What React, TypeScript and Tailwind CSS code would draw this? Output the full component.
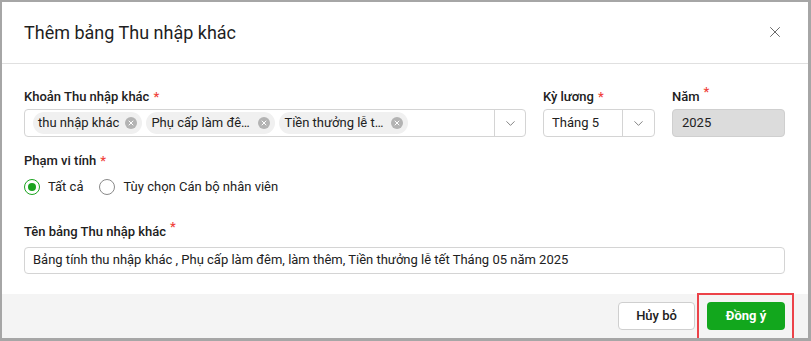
import { X, ChevronDown } from 'lucide-react';

function Tag({ label, truncate }: { label: string; truncate?: boolean }) {
  return (
    <div className="flex h-[22px] items-center gap-[6px] rounded-[11px] bg-[#f0f0f0] pl-[5px] pr-[5px]">
      <span className={truncate ? 'max-w-[101px] truncate' : ''}>{label}</span>
      <span className="flex h-[12px] w-[12px] items-center justify-center rounded-full bg-[#b3b3b3]">
        <X size={8} strokeWidth={3} className="text-white" />
      </span>
    </div>
  );
}

function Label({ text, raised }: { text: string; raised?: boolean }) {
  return (
    <div className="flex h-[16px] items-center text-[13px] font-medium leading-[16px] text-[#212121]">
      {text}
      <span className={raised ? 'relative -top-[5px] ml-[4px] text-[#f0433c]' : 'ml-[4px] text-[#f0433c]'}>*</span>
    </div>
  );
}

function Radio({ checked, label }: { checked?: boolean; label: string }) {
  return (
    <div className="flex items-center gap-[8px]">
      <span
        className={
          checked
            ? 'flex h-[16px] w-[16px] items-center justify-center rounded-full border-[1.5px] border-[#1aa31e]'
            : 'h-[16px] w-[16px] rounded-full border border-[#8a8a8a]'
        }
      >
        {checked && <span className="h-[8px] w-[8px] rounded-full bg-[#1aa31e]" />}
      </span>
      <span>{label}</span>
    </div>
  );
}

export default function App() {
  return (
    <div
      className="relative flex h-[341px] w-[811px] flex-col overflow-hidden border-b-[3px] border-l-2 border-r-[3px] border-t-2 border-[#a6a6a6] bg-white text-[13px] text-[#212121]"
      style={{ fontFamily: 'Roboto, "Noto Sans", sans-serif' }}
    >
      {/* header */}
      <div className="flex h-[62px] shrink-0 items-center justify-between border-b border-[#e0e0e0] pl-[22px] pr-[24px]">
        <h1 className="text-[18px] leading-[22px] text-[#1f1f1f]">Thêm bảng Thu nhập khác</h1>
        <X size={18} strokeWidth={1.3} className="mt-[-2px] text-[#666]" />
      </div>

      {/* body */}
      <div className="flex flex-1 flex-col pl-[22px] pr-[23px] pt-[25px]">
        <div className="flex gap-[17px]">
          <div className="flex w-[502px] flex-col gap-[4px]">
            <Label text="Khoản Thu nhập khác" />
            <div className="flex h-[28px] items-center rounded-[4px] border border-[#d4d4d4]">
              <div className="flex flex-1 items-center gap-[4px] pl-[8px]">
                <Tag label="thu nhập khác" />
                <Tag label="Phụ cấp làm đêm, làm thêm" truncate />
                <Tag label="Tiền thưởng lễ tết, ngày lễ" truncate />
              </div>
              <div className="flex h-full w-[31px] items-center justify-center border-l border-[#d4d4d4]">
                <ChevronDown size={15} strokeWidth={1.3} className="text-[#666]" />
              </div>
            </div>
          </div>
          <div className="flex w-[112px] flex-col gap-[4px]">
            <Label text="Kỳ lương" />
            <div className="flex h-[28px] items-center rounded-[4px] border border-[#d4d4d4]">
              <span className="flex-1 pl-[8px]">Tháng 5</span>
              <div className="flex h-full w-[32px] items-center justify-center border-l border-[#d4d4d4]">
                <ChevronDown size={15} strokeWidth={1.3} className="text-[#666]" />
              </div>
            </div>
          </div>
          <div className="flex w-[113px] flex-col gap-[4px]">
            <Label text="Năm" raised />
            <div className="flex h-[28px] items-center rounded-[4px] border border-[#cfcfcf] bg-[#dcdcdc] pl-[9px]">
              2025
            </div>
          </div>
        </div>

        <div className="mt-[16px]">
          <Label text="Phạm vi tính" />
        </div>
        <div className="mt-[8px] flex items-center gap-[16px]">
          <Radio checked label="Tất cả" />
          <Radio label="Tùy chọn Cán bộ nhân viên" />
        </div>

        <div className="mt-[27px]">
          <Label text="Tên bảng Thu nhập khác" raised />
        </div>
        <div className="mt-[7px] flex h-[27px] items-center rounded-[4px] border border-[#d4d4d4] pl-[8px]">
          Bảng tính thu nhập khác , Phụ cấp làm đêm, làm thêm, Tiền thưởng lễ tết Tháng 05 năm 2025
        </div>
      </div>

      {/* footer */}
      <div className="flex h-[44px] shrink-0 items-center justify-end gap-[12px] bg-[#f4f4f4] pr-[23px]">
        <button className="h-[28px] w-[77px] rounded-[4px] border border-[#cfcfcf] bg-white text-[13px] font-medium text-[#212121]">
          Hủy bỏ
        </button>
        <button className="h-[28px] w-[78px] rounded-[4px] bg-[#12a71d] text-[13px] font-bold text-white">
          Đồng ý
        </button>
      </div>

      {/* highlight annotation */}
      <div className="absolute left-[695px] top-[291px] h-[48px] w-[97px] border-2 border-[#ec4249]" />
    </div>
  );
}
